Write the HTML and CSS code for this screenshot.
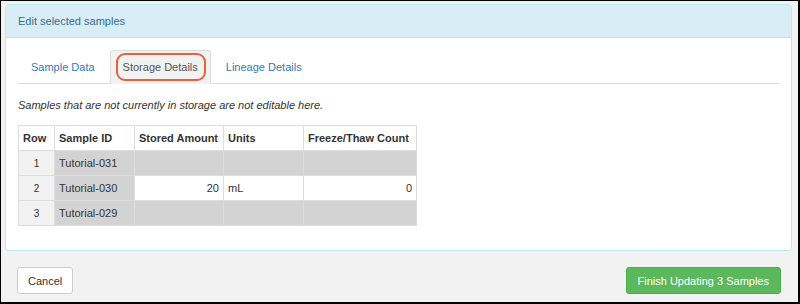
FILE: index.html
```html
<!DOCTYPE html>
<html lang="en">
<head>
    <meta charset="UTF-8">
    <title>Edit selected samples</title>
    <link rel="stylesheet" href="styles.css">
</head>
<body>
    <div class="frame">
        <!-- Painel principal -->
        <div class="panel">
            <div class="panel-heading">Edit selected samples</div>
            <div class="panel-body">
                <ul class="tabs">
                    <li class="tab"><a href="#">Sample Data</a></li>
                    <li class="tab active"><a href="#">Storage Details</a><span class="ring"></span></li>
                    <li class="tab"><a href="#">Lineage Details</a></li>
                </ul>

                <p class="hint">Samples that are not currently in storage are not editable here.</p>

                <table class="grid">
                    <thead>
                        <tr>
                            <th class="c-row">Row</th>
                            <th class="c-id">Sample ID</th>
                            <th class="c-amount">Stored Amount</th>
                            <th class="c-units">Units</th>
                            <th class="c-count">Freeze/Thaw Count</th>
                        </tr>
                    </thead>
                    <tbody>
                        <tr>
                            <td class="num">1</td>
                            <td class="off">Tutorial-031</td>
                            <td class="off"></td>
                            <td class="off"></td>
                            <td class="off"></td>
                        </tr>
                        <tr>
                            <td class="num">2</td>
                            <td class="off">Tutorial-030</td>
                            <td class="right">20</td>
                            <td>mL</td>
                            <td class="right">0</td>
                        </tr>
                        <tr>
                            <td class="num">3</td>
                            <td class="off">Tutorial-029</td>
                            <td class="off"></td>
                            <td class="off"></td>
                            <td class="off"></td>
                        </tr>
                    </tbody>
                </table>
            </div>
        </div>

        <!-- Rodapé com botões -->
        <div class="footer">
            <button class="btn">Cancel</button>
            <button class="btn btn-success">Finish Updating 3 Samples</button>
        </div>
    </div>
</body>
</html>
```

FILE: styles.css
```css
html, body {
    margin: 0;
    padding: 0;
    width: 100%;
    height: 100%;
    overflow: hidden;
}

body {
    font-family: "Liberation Sans", Arial, sans-serif;
    font-size: 11px;
    color: #333;
}

.frame {
    box-sizing: border-box;
    width: 800px;
    height: 304px;
    border: solid #000;
    border-width: 1px 2px 2px 1px;
    background: #f2f2f2;
    padding: 3px 6px 0 4px;
}

/* Painel */
.panel {
    background: #fff;
    border: 1px solid #bce8f1;
    border-radius: 4px;
    height: 247px;
    box-sizing: border-box;
}

.panel-heading {
    height: 32px;
    line-height: 32px;
    padding-left: 12px;
    background: #d9edf7;
    color: #31708f;
    border-bottom: 1px solid #bce8f1;
    border-radius: 3px 3px 0 0;
}

.panel-body {
    padding: 12px 11px 0 12px;
}

/* Abas */
.tabs {
    display: flex;
    list-style: none;
    margin: 0;
    padding: 0;
    border-bottom: 1px solid #ddd;
}

.tab {
    position: relative;
    margin-right: 2px;
    margin-bottom: -1px;
}

.tab a {
    display: block;
    height: 32px;
    line-height: 32px;
    padding: 0 12px;
    border: 1px solid transparent;
    border-radius: 3px 3px 0 0;
    color: #337ab7;
    text-decoration: none;
}

.tab.active a {
    color: #555;
    background: #f2f2f2;
    border-color: #ddd #ddd transparent;
}

/* Marcação em laranja sobre a aba ativa */
.ring {
    position: absolute;
    top: 3px;
    left: 6px;
    right: 5px;
    bottom: 3px;
    border: 2px solid #e8603c;
    border-radius: 9px;
}

.hint {
    margin: 14px 0 13px;
    font-style: italic;
    line-height: 14px;
}

/* Tabela */
.grid {
    border-collapse: collapse;
    table-layout: fixed;
    width: 399px;
}

.grid th, .grid td {
    border: 1px solid #ddd;
    height: 25px;
    padding: 0 4px;
    text-align: left;
    white-space: nowrap;
    box-sizing: border-box;
}

.grid th {
    background: #fff;
    font-weight: bold;
}

.c-row { width: 36px; }
.c-id { width: 80px; }
.c-amount { width: 89px; }
.c-units { width: 80px; }
.c-count { width: 113px; }

.grid td.num {
    background: #f2f2f2;
    text-align: center;
    font-size: 10px;
}

.grid td.off {
    background: #d3d3d3;
}

.grid td.right {
    text-align: right;
}

/* Rodapé */
.footer {
    display: flex;
    justify-content: space-between;
    padding: 16px 11px 0 12px;
}

.btn {
    height: 27px;
    padding: 0 10px;
    font-family: inherit;
    font-size: 11px;
    color: #333;
    background: #fff;
    border: 1px solid #ccc;
    border-radius: 3px;
}

.btn-success {
    padding: 0 11px;
    color: #fff;
    background: #5cb85c;
    border-color: #4cae4c;
}
```
